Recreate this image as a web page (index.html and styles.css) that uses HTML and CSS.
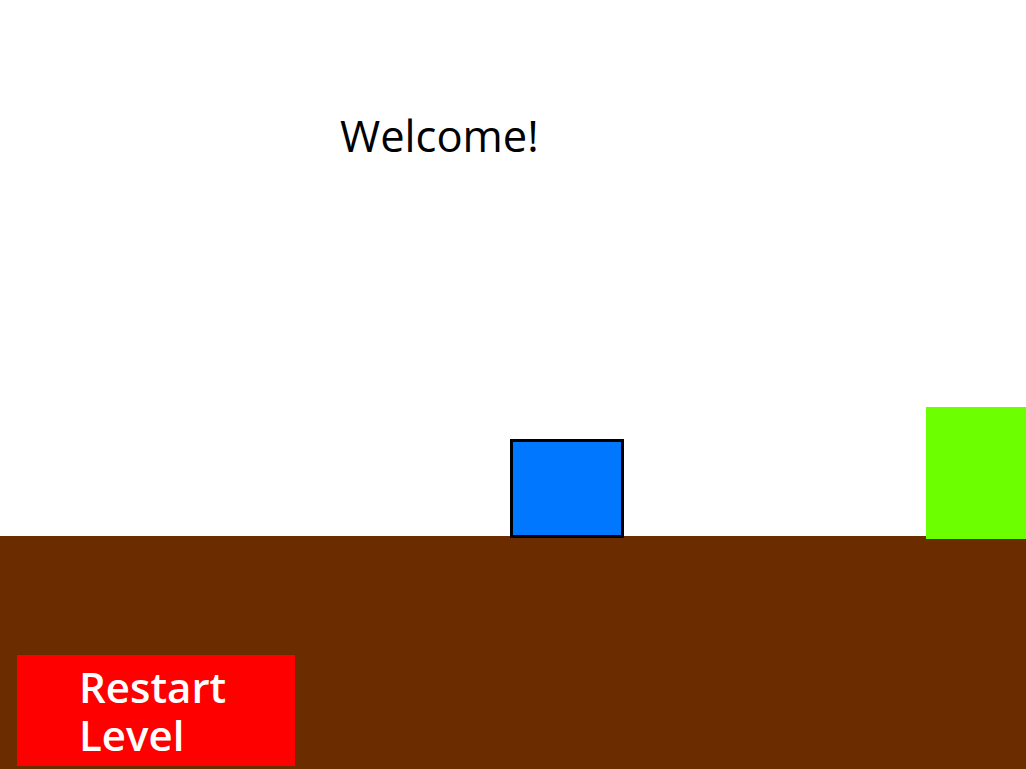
FILE: index.html
```html
<!DOCTYPE html>
<html>
<head>
<meta charset="utf-8">
<link rel="stylesheet" href="styles.css">
</head>
<body>
<div class="stage">
  <div class="sky">
    <div class="message">Welcome!</div>
    <div class="player"></div>
    <div class="goal"></div>
  </div>
  <div class="ground">
    <button class="restart">Restart<br>Level</button>
  </div>
</div>
</body>
</html>
```
FILE: styles.css
```css
html, body {
  margin: 0;
  padding: 0;
  background: #ffffff;
  overflow: hidden;
}
.stage {
  width: 1026px;
  height: 769px;
  display: flex;
  flex-direction: column;
  font-family: "Open Sans", "Noto Sans", sans-serif;
}
.sky {
  position: relative;
  height: 536px;
  flex: none;
}
.message {
  position: absolute;
  left: 340px;
  top: 107px;
  font-size: 43.5px;
  line-height: 58px;
  color: #000;
}
.player {
  position: absolute;
  left: 510px;
  top: 439px;
  width: 108px;
  height: 93px;
  background: #0077ff;
  border: 3px solid #000;
}
.goal {
  position: absolute;
  left: 926px;
  top: 407px;
  width: 100px;
  height: 132px;
  background: #6cff00;
  z-index: 2;
}
.ground {
  flex: 1;
  background: #6b2c00;
  padding: 119px 0 0 17px;
}
.restart {
  display: block;
  width: 278px;
  height: 111px;
  margin: 0;
  border: none;
  background: #ff0000;
  color: #ffffff;
  font-family: "Open Sans", "Noto Sans", sans-serif;
  font-size: 42px;
  font-weight: 600;
  line-height: 48px;
  text-align: left;
  padding: 0 0 0 62px;
  box-sizing: border-box;
  vertical-align: top;
}
```
